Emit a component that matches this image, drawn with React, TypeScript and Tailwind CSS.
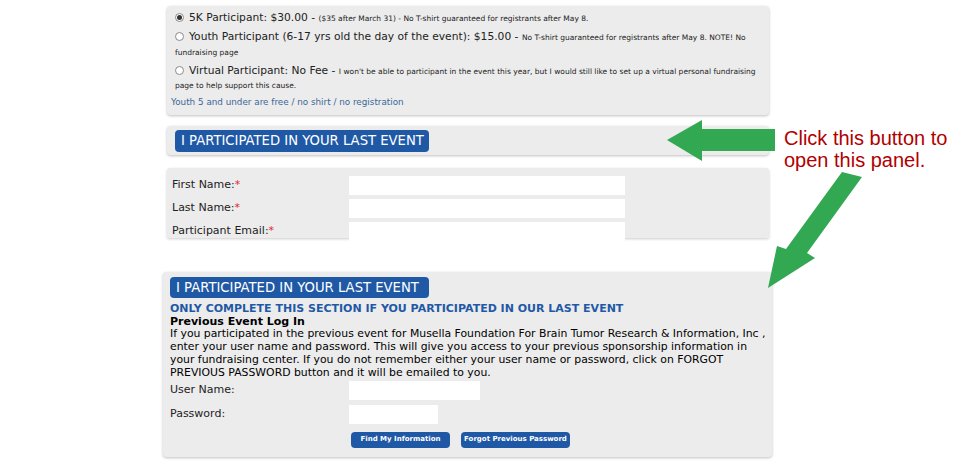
import React from "react";

const font = { fontFamily: '"DejaVu Sans", Verdana, sans-serif' };

function Radio({ checked }: { checked?: boolean }) {
  return (
    <span className="mt-[3px] mr-[5px] flex h-[9px] w-[9px] shrink-0 items-center justify-center rounded-full border border-[#8a8a8a] bg-white">
      {checked && <span className="h-[5px] w-[5px] rounded-full bg-[#333]" />}
    </span>
  );
}

function BlueButton({ children, className = "" }: { children: React.ReactNode; className?: string }) {
  return (
    <div className={`inline-flex items-center whitespace-nowrap rounded-[4px] bg-[#1f59a6] text-white ${className}`}>
      {children}
    </div>
  );
}

function Field({ label, required }: { label: string; required?: boolean }) {
  return (
    <div className="flex h-[19px] items-center">
      <div className="w-[182px] pl-[5px] text-[11px] text-[#222]">
        {label}
        {required && <span className="text-[#e8232f]">*</span>}
      </div>
      <div className="h-[19px] w-[276px] bg-white" />
    </div>
  );
}

function Arrows() {
  return (
    <svg className="pointer-events-none absolute left-0 top-0" width="970" height="470" viewBox="0 0 970 470">
      <polygon fill="#33a852" points="667,140 702,120 702,129 775,129 775,151 702,151 702,161" />
      <polygon fill="#33a852" points="842,172 862,177 807,253 815,258 768,288 777,246 786,249" />
    </svg>
  );
}

export default function App() {
  return (
    <div className="relative h-[470px] w-[970px] overflow-hidden bg-white" style={font}>
      <div className="flex flex-col">
        {/* registration types */}
        <div className="ml-[167px] mt-[6px] h-[109px] w-[602px] rounded-[4px] bg-[#ececec] pl-[8px] pt-[4px] shadow-[0_1px_3px_rgba(0,0,0,0.25)]">
          <div className="flex items-start text-[#222]">
            <Radio checked />
            <p className="text-[10.7px] leading-[15px]">
              5K Participant: $30.00 -{" "}
              <span className="text-[7.5px]">($35 after March 31) - No T-shirt guaranteed for registrants after May 8.</span>
            </p>
          </div>
          <div className="mt-[3px] flex items-start text-[#222]">
            <Radio />
            <p className="text-[10.7px] leading-[16px]">
              Youth Participant (6-17 yrs old the day of the event): $15.00 -{" "}
              <span className="text-[7.5px]">No T-shirt guaranteed for registrants after May 8. NOTE! No</span>
            </p>
          </div>
          <p className="text-[7.5px] leading-[14px] text-[#222]">fundraising page</p>
          <div className="mt-[3px] flex items-start text-[#222]">
            <Radio />
            <p className="text-[10.7px] leading-[15px]">
              Virtual Participant: No Fee -{" "}
              <span className="text-[7.5px]">
                I won't be able to participant in the event this year, but I would still like to set up a virtual personal fundraising
              </span>
            </p>
          </div>
          <p className="text-[7.5px] leading-[14px] text-[#222]">page to help support this cause.</p>
          <p className="-ml-[4px] mt-[3px] text-[8.8px] text-[#3a679a]">Youth 5 and under are free / no shirt / no registration</p>
        </div>

        {/* button panel */}
        <div className="ml-[167px] mt-[11px] flex h-[29px] w-[602px] items-center rounded-[4px] bg-[#ececec] pl-[8px] shadow-[0_1px_3px_rgba(0,0,0,0.25)]">
          <BlueButton className="h-[22px] w-[254px] px-[6px] text-[13.2px]">I PARTICIPATED IN YOUR LAST EVENT</BlueButton>
        </div>

        {/* cut-off participant panel */}
        <div className="ml-[167px] mt-[13px] flex h-[70px] w-[602px] flex-col gap-[4px] rounded-t-[4px] bg-[#ececec] pt-[8px] shadow-[0_1px_3px_rgba(0,0,0,0.2)]">
          <Field label="First Name:" required />
          <Field label="Last Name:" required />
          <Field label="Participant Email:" required />
        </div>

        {/* expanded panel */}
        <div className="ml-[163px] mt-[34px] h-[185px] w-[609px] rounded-[4px] bg-[#ececec] pl-[7px] pt-[3px] shadow-[0_1px_3px_rgba(0,0,0,0.25)]">
          <BlueButton className="h-[21px] w-[259px] px-[6px] text-[13.2px]">I PARTICIPATED IN YOUR LAST EVENT</BlueButton>
          <p className="mt-[3px] text-[11px] font-bold leading-[13px] text-[#1f59a6]">
            ONLY COMPLETE THIS SECTION IF YOU PARTICIPATED IN OUR LAST EVENT
          </p>
          <p className="text-[11px] font-bold leading-[13px] text-black">Previous Event Log In</p>
          <p className="whitespace-nowrap text-[10.85px] leading-[12.9px] text-black">
            If you participated in the previous event for Musella Foundation For Brain Tumor Research &amp; Information, Inc ,
            <br />
            enter your user name and password. This will give you access to your previous sponsorship information in
            <br />
            your fundraising center. If you do not remember either your user name or password, click on FORGOT
            <br />
            PREVIOUS PASSWORD button and it will be emailed to you.
          </p>
          <div className="mt-[1px] flex flex-col gap-[5px]">
            <div className="flex h-[19px] items-center">
              <div className="w-[179px] text-[11px] text-[#222]">User Name:</div>
              <div className="h-[19px] w-[131px] bg-white" />
            </div>
            <div className="flex h-[19px] items-center">
              <div className="w-[179px] text-[11px] text-[#222]">Password:</div>
              <div className="h-[19px] w-[89px] bg-white" />
            </div>
          </div>
          <div className="ml-[181px] mt-[8px] flex gap-[11px]">
            <BlueButton className="h-[16px] w-[99px] justify-center text-[7px] font-bold">Find My Information</BlueButton>
            <BlueButton className="h-[16px] w-[109px] justify-center text-[7px] font-bold">Forgot Previous Password</BlueButton>
          </div>
        </div>
      </div>

      <div
        className="absolute left-[784px] top-[127px] text-[20px] leading-[22px] text-[#b00000]"
        style={{ fontFamily: '"Liberation Sans", Arial, sans-serif' }}
      >
        Click this button to
        <br />
        open this panel.
      </div>

      <Arrows />
    </div>
  );
}
